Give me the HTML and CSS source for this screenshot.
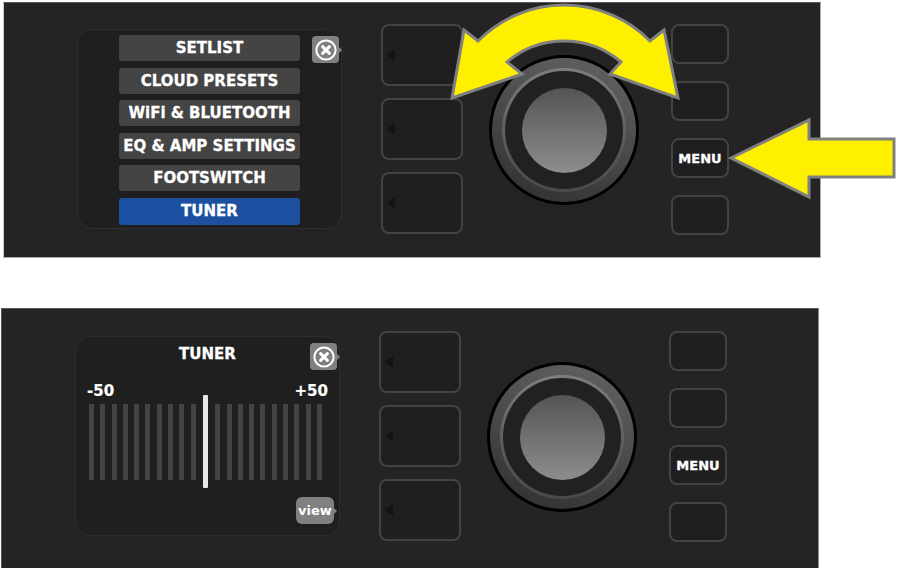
FILE: index.html
```html
<!DOCTYPE html>
<html lang="en">
<head>
<meta charset="utf-8">
<title>Tuner menu</title>
<link rel="stylesheet" href="styles.css">
</head>
<body>
<main class="page">
  <section class="panel panel-top">
    <div class="screen">
      <ul class="menu">
        <li class="menu-item">SETLIST</li>
        <li class="menu-item">CLOUD PRESETS</li>
        <li class="menu-item">WiFi &amp; BLUETOOTH</li>
        <li class="menu-item">EQ &amp; AMP SETTINGS</li>
        <li class="menu-item">FOOTSWITCH</li>
        <li class="menu-item menu-item-active">TUNER</li>
      </ul>
      <div class="close">
        <svg class="close-icon" viewBox="0 0 22 22"><circle cx="11" cy="11" r="9.6"/><path d="M7.6 7.6l6.8 6.8M14.4 7.6l-6.8 6.8"/></svg>
      </div>
    </div>
    <div class="soft-col"><div class="soft"></div><div class="soft"></div><div class="soft"></div></div>
    <div class="knob"><div class="knob-ring"><div class="knob-line"><div class="knob-well"><div class="knob-cap"></div></div></div></div></div>
    <div class="hard-col"><div class="hard"></div><div class="hard"></div><div class="hard">MENU</div><div class="hard"></div></div>
  </section>
  <section class="panel panel-bottom">
    <div class="screen">
      <h2 class="tuner-title">TUNER</h2>
      <div class="tuner-labels"><span>-50</span><span>+50</span></div>
      <div class="bars">
        <i class="bar"></i><i class="bar"></i><i class="bar"></i><i class="bar"></i><i class="bar"></i><i class="bar"></i><i class="bar"></i><i class="bar"></i><i class="bar"></i><i class="bar"></i>
        <i class="bar-center"></i>
        <i class="bar"></i><i class="bar"></i><i class="bar"></i><i class="bar"></i><i class="bar"></i><i class="bar"></i><i class="bar"></i><i class="bar"></i><i class="bar"></i><i class="bar"></i>
      </div>
      <div class="close">
        <svg class="close-icon" viewBox="0 0 22 22"><circle cx="11" cy="11" r="9.6"/><path d="M7.6 7.6l6.8 6.8M14.4 7.6l-6.8 6.8"/></svg>
      </div>
      <div class="view">view</div>
    </div>
    <div class="soft-col"><div class="soft"></div><div class="soft"></div><div class="soft"></div></div>
    <div class="knob"><div class="knob-ring"><div class="knob-line"><div class="knob-well"><div class="knob-cap"></div></div></div></div></div>
    <div class="hard-col"><div class="hard"></div><div class="hard"></div><div class="hard">MENU</div><div class="hard"></div></div>
  </section>
  <svg class="arrows" viewBox="0 0 902 570" aria-hidden="true">
    <path d="M452 98L464 30L478 41A121 121 0 0 1 650 41L664 30L678 98L610 74L621 62A88 88 0 0 0 507 62L522 74Z"/>
    <path d="M731 158L809 120V139H894V177H809V197Z"/>
  </svg>
</main>
</body>
</html>
```
FILE: styles.css
```css
* { box-sizing: border-box; }
html, body { margin: 0; padding: 0; background: #fff; }
body { font-family: "DejaVu Sans", "Liberation Sans", sans-serif; overflow: hidden; }
.page { position: relative; width: 902px; height: 570px; padding-top: 2px; }

.panel {
  display: flex;
  align-items: flex-start;
  width: 818px;
  padding-left: 73px;
  background: #252324;
  border-top: 1px solid #5a5a5a;
}
.panel-top {
  height: 256px;
  margin-left: 3px;
  padding-top: 21px;
  border-left: 1px solid #ccc;
  border-right: 1px solid #aaa;
  border-bottom: 1px solid #aaa;
}
.panel-bottom {
  height: 260px;
  margin-left: 1px;
  margin-top: 50px;
  padding-top: 22px;
  border-left: 1px solid #555;
  border-right: 1px solid #888;
}

.screen {
  position: relative;
  flex: none;
  width: 265px;
  height: 200px;
  margin-top: 5px;
  background: #201f20;
  border: 1px solid #2f2e2f;
  border-radius: 15px;
  color: #fff;
}

.menu {
  list-style: none;
  display: flex;
  flex-direction: column;
  gap: 6.5px;
  margin: 0;
  padding: 5px 0 0 41px;
}
.menu-item {
  display: flex;
  align-items: center;
  justify-content: center;
  width: 181px;
  height: 26px;
  background: #444;
  border-radius: 3px;
  font-size: 15px;
  font-weight: 700;
  white-space: nowrap;
  -webkit-text-stroke: 0.3px #fff;
}
.menu-item-active { height: 27px; background: #1d4fa0; }

.close {
  position: absolute;
  left: 234px;
  top: 6px;
  display: flex;
  align-items: center;
  justify-content: center;
  width: 27px;
  height: 27px;
  background: #808080;
  border-radius: 4px;
}
.close::after,
.view::after {
  content: "";
  position: absolute;
  top: 50%;
  left: 100%;
  margin-top: -3px;
  border-left: 3px solid #808080;
  border-top: 3px solid transparent;
  border-bottom: 3px solid transparent;
}
.close-icon { width: 22px; height: 22px; fill: none; stroke: #fff; }
.close-icon circle { stroke-width: 2; }
.close-icon path { stroke-width: 3; stroke-linecap: round; }

.tuner-title {
  margin: 8px 0 0;
  text-align: center;
  font-size: 15px;
  line-height: 18px;
  font-weight: 700;
  -webkit-text-stroke: 0.3px #fff;
}
.tuner-labels {
  display: flex;
  justify-content: space-between;
  margin-top: 19px;
  padding: 0 11px;
  font-size: 15px;
  line-height: 18px;
  font-weight: 700;
  -webkit-text-stroke: 0.2px #fff;
}
.bars {
  display: flex;
  align-items: center;
  gap: 6.3px;
  margin-top: -5px;
  padding-left: 13px;
}
.bar { flex: none; width: 5px; height: 76px; background: #444; border-radius: 1px; }
.bar-center { flex: none; width: 5px; height: 93px; margin: 0 1px; background: #e8e8e8; border-radius: 1px; }
.view {
  position: absolute;
  left: 220px;
  top: 160px;
  display: flex;
  align-items: center;
  justify-content: center;
  width: 38px;
  height: 27px;
  background: #808080;
  border-radius: 6px;
  font-size: 13px;
  font-weight: 700;
}

.soft-col { display: flex; flex-direction: column; gap: 12px; flex: none; margin-left: 39px; }
.soft {
  display: flex;
  align-items: center;
  width: 82px;
  height: 62px;
  padding-left: 4px;
  background: #201f20;
  border: 2px solid #434343;
  border-radius: 8px;
}
.soft::before {
  content: "";
  border-right: 8px solid #131313;
  border-top: 6px solid transparent;
  border-bottom: 6px solid transparent;
}

.knob {
  display: flex;
  align-items: center;
  justify-content: center;
  flex: none;
  width: 150px;
  height: 150px;
  margin: 31px 0 0 26px;
  background: #000;
  border-radius: 50%;
}
.knob-ring {
  display: flex;
  align-items: center;
  justify-content: center;
  width: 144px;
  height: 144px;
  border-radius: 50%;
  background: linear-gradient(200deg, #636466 0%, #4a4a4b 50%, #2e2e2e 100%);
}
.knob-line {
  display: flex;
  align-items: center;
  justify-content: center;
  width: 124px;
  height: 124px;
  border-radius: 50%;
  background: linear-gradient(180deg, #7d7e80 0%, #5a5a5b 60%, #4a4a4a 100%);
}
.knob-well {
  display: flex;
  align-items: center;
  justify-content: center;
  width: 118px;
  height: 118px;
  border-radius: 50%;
  background: #222122;
}
.knob-cap {
  width: 85px;
  height: 85px;
  border-radius: 50%;
  background: linear-gradient(180deg, #535455 0%, #8c8d8f 100%);
}

.hard-col { display: flex; flex-direction: column; gap: 17px; flex: none; margin-left: 32px; }
.hard {
  display: flex;
  align-items: center;
  justify-content: center;
  width: 58px;
  height: 40px;
  background: #201f20;
  border: 2px solid #434343;
  border-radius: 8px;
  color: #fff;
  font-size: 13px;
  font-weight: 700;
  -webkit-text-stroke: 0.3px #fff;
}

.arrows { position: absolute; left: 0; top: 0; width: 902px; height: 570px; pointer-events: none; }
.arrows path { fill: #fff000; stroke: #808080; stroke-width: 3; stroke-miterlimit: 10; }
```
